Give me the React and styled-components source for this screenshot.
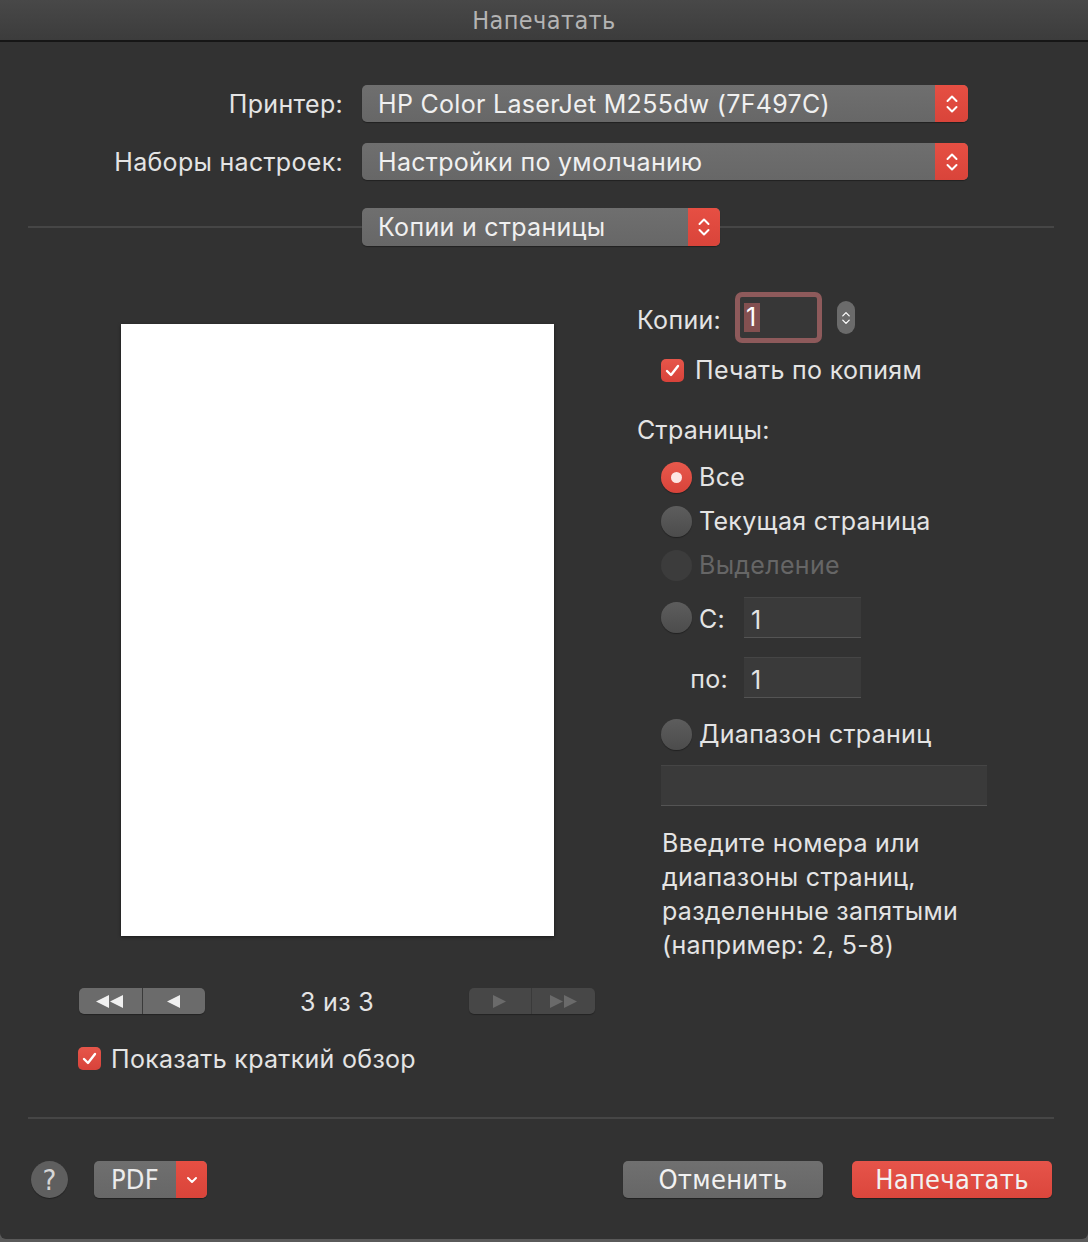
import React from "react";
import styled, { createGlobalStyle } from "styled-components";

const Global = createGlobalStyle`
  html, body { margin: 0; padding: 0; background: #5a5a5a; }
  body { font-family: Inter, "Noto Sans", "DejaVu Sans", sans-serif; -webkit-font-smoothing: antialiased; }
  * { box-sizing: border-box; }
`;

const GRAY = "#6b6b6b";
const TEXT = "#e4e4e4";
const CONDENSED = `"Liberation Sans Narrow", "DejaVu Sans Condensed", "Roboto", sans-serif`;
const FS = "25px";
const LS = "0.3px";

const Window = styled.div`
  width: 1088px;
  height: 1239px;
  background: #323232;
  border-radius: 0 0 6px 6px;
  display: flex;
  flex-direction: column;
  overflow: hidden;
  letter-spacing: ${LS};
`;

const TitleBar = styled.div`
  height: 42px;
  flex: 0 0 42px;
  background: linear-gradient(#484848, #3c3c3c);
  border-bottom: 2px solid #161616;
  display: flex;
  align-items: center;
  justify-content: center;
`;

const Title = styled.span`
  font-family: ${CONDENSED};
  font-size: 25px;
  color: #b4b4b4;
  letter-spacing: 0.4px;
  margin-top: 1px;
`;

const FormGrid = styled.div`
  display: grid;
  grid-template-columns: 343px 606px;
  grid-auto-rows: 37px;
  column-gap: 19px;
  row-gap: 21px;
  margin-top: 43px;
`;

const Label = styled.div`
  font-size: ${FS};
  color: ${TEXT};
  display: flex;
  align-items: center;
  justify-content: ${(p) => (p.$align === "right" ? "flex-end" : "flex-start")};
  white-space: nowrap;
`;

const Popup = styled.div`
  width: ${(p) => p.$width || "606px"};
  height: ${(p) => p.$height || "37px"};
  margin-left: ${(p) => p.$ml || "0"};
  background: linear-gradient(#6f6f6f, #676767);
  border-radius: 5px;
  display: flex;
  align-items: stretch;
  overflow: hidden;
  box-shadow: 0 1px 1px rgba(0, 0, 0, 0.35);
`;

const PopupText = styled.div`
  flex: 1;
  display: flex;
  align-items: center;
  padding-left: 16px;
  font-size: ${FS};
  color: #f0f0f0;
  white-space: nowrap;
`;

const RedCap = styled.div`
  flex: 0 0 ${(p) => p.$width || "33px"};
  background: linear-gradient(#e64f43, #d9443a);
  display: flex;
  align-items: center;
  justify-content: center;
`;

const UpDown = ({ w = 14, h = 24, sw = 2 }) => (
  <svg width={w} height={h} viewBox="0 0 14 24" fill="none">
    <path d="M2.5 9 L7 4.5 L11.5 9" stroke="#fff" strokeWidth={sw} strokeLinecap="round" strokeLinejoin="round" />
    <path d="M2.5 15 L7 19.5 L11.5 15" stroke="#fff" strokeWidth={sw} strokeLinecap="round" strokeLinejoin="round" />
  </svg>
);

const DividerRow = styled.div`
  display: flex;
  align-items: center;
  margin-top: 28px;
  padding: 0 34px 0 28px;
`;

const Line = styled.div`
  height: 2px;
  background: #464646;
  flex: ${(p) => (p.$fixed ? `0 0 ${p.$fixed}` : "1")};
`;

const Main = styled.div`
  display: flex;
  align-items: flex-start;
`;

const LeftCol = styled.div`
  margin-left: 79px;
  width: 516px;
  display: flex;
  flex-direction: column;
  align-items: center;
`;

const Page = styled.div`
  margin-top: 78px;
  width: 433px;
  height: 612px;
  background: #ffffff;
  box-shadow: 0 1px 3px rgba(0, 0, 0, 0.5);
`;

const NavRow = styled.div`
  margin-top: 52px;
  width: 516px;
  height: 26px;
  display: flex;
  align-items: center;
  justify-content: space-between;
`;

const SegGroup = styled.div`
  display: flex;
  width: 126px;
  height: 26px;
  border-radius: 5px;
  overflow: hidden;
  background: ${(p) => (p.$disabled ? "#474747" : GRAY)};
  box-shadow: 0 1px 1px rgba(0, 0, 0, 0.3);
`;

const Seg = styled.div`
  flex: 1;
  display: flex;
  align-items: center;
  justify-content: center;
  & + & {
    border-left: 1px solid ${(p) => (p.$disabled ? "#3a3a3a" : "#575757")};
  }
`;

const PageCount = styled.span`
  font-size: ${FS};
  color: ${TEXT};
  margin-top: 2px;
`;

const Tri = ({ dir, double, color }) => {
  const one = dir === "left" ? "M13 0 L13 13 L0 6.5 Z" : "M0 0 L0 13 L13 6.5 Z";
  return (
    <svg width={double ? 28 : 14} height="13" viewBox={`0 0 ${double ? 28 : 14} 13`}>
      <path d={one} fill={color} />
      {double && <path d={one} fill={color} transform="translate(14 0)" />}
    </svg>
  );
};

const CheckRow = styled.div`
  display: flex;
  align-items: center;
  gap: ${(p) => p.$gap || "10px"};
  margin-top: ${(p) => p.$mt || "0"};
  margin-left: ${(p) => p.$ml || "0"};
  align-self: flex-start;
  height: ${(p) => p.$h || "auto"};
`;

const CheckBox = styled.div`
  width: 23px;
  height: 23px;
  border-radius: 5px;
  background: linear-gradient(#e6564a, #d8423a);
  display: flex;
  align-items: center;
  justify-content: center;
  flex: 0 0 23px;
`;

const Check = () => (
  <svg width="15" height="13" viewBox="0 0 15 13" fill="none">
    <path d="M2 7 L6 11 L13 2" stroke="#fff" strokeWidth="2.4" strokeLinecap="round" strokeLinejoin="round" />
  </svg>
);

const RightCol = styled.div`
  margin-left: 42px;
  display: flex;
  flex-direction: column;
`;

const CopiesRow = styled.div`
  margin-top: 46px;
  height: 51px;
  display: flex;
  align-items: center;
`;

const CopiesLabel = styled.span`
  width: 98px;
  font-size: ${FS};
  color: ${TEXT};
  margin-top: 4px;
`;

const FocusRing = styled.div`
  width: 87px;
  height: 51px;
  border-radius: 7px;
  background: #8e5a5b;
  padding: 5px;
  display: flex;
`;

const FocusField = styled.div`
  flex: 1;
  background: #373737;
  border-radius: 2px;
  display: flex;
  align-items: center;
  padding-left: 4px;
`;

const Selected = styled.span`
  background: #835050;
  color: #fff;
  font-size: ${FS};
  line-height: 29px;
  padding: 0 4px 0 2px;
`;

const SmallStepper = styled.div`
  margin-left: 15px;
  width: 18px;
  height: 33px;
  border-radius: 9px;
  background: ${GRAY};
  display: flex;
  align-items: center;
  justify-content: center;
`;

const Heading = styled.div`
  font-size: ${FS};
  color: ${TEXT};
  height: 30px;
  line-height: 30px;
  margin-top: ${(p) => p.$mt || "0"};
`;

const OptionRow = styled.div`
  height: ${(p) => p.$h || "44px"};
  margin-top: ${(p) => p.$mt || "0"};
  margin-left: 24px;
  display: flex;
  align-items: center;
`;

const Radio = styled.div`
  width: 31px;
  height: 31px;
  border-radius: 50%;
  flex: 0 0 31px;
  display: flex;
  align-items: center;
  justify-content: center;
  background: ${(p) =>
    p.$on
      ? "linear-gradient(#e8594c, #d8433a)"
      : p.$disabled
      ? "#3c3c3c"
      : "linear-gradient(#5d5d5d, #4c4c4c)"};
  box-shadow: ${(p) => (p.$disabled ? "none" : "0 1px 1px rgba(0,0,0,0.35)")};
  &::after {
    content: "";
    display: ${(p) => (p.$on ? "block" : "none")};
    width: 11px;
    height: 11px;
    border-radius: 50%;
    background: #fde6e3;
  }
`;

const OptionText = styled.span`
  margin-left: 7px;
  font-size: ${FS};
  color: ${(p) => (p.$disabled ? "#666666" : TEXT)};
  white-space: nowrap;
`;

const FieldLabel = styled.span`
  width: ${(p) => p.$w};
  margin-left: ${(p) => p.$ml || "0"};
  text-align: ${(p) => p.$ta || "right"};
  font-size: ${FS};
  color: ${TEXT};
  margin-top: 3px;
`;

const Field = styled.div`
  width: ${(p) => p.$w || "117px"};
  height: 41px;
  margin-left: ${(p) => p.$ml || "0"};
  background: #3a3a3a;
  border-top: 1px solid #454545;
  border-bottom: 1px solid #545454;
  display: flex;
  align-items: center;
  padding-left: 7px;
  padding-top: 4px;
  font-size: ${FS};
  color: ${TEXT};
`;

const HelpText = styled.div`
  margin-top: 20px;
  margin-left: 25px;
  font-size: ${FS};
  line-height: 34px;
  color: ${TEXT};
`;

const BottomLine = styled.div`
  margin: 47px 34px 0 28px;
  height: 2px;
  background: #464646;
`;

const Footer = styled.div`
  margin-top: 41px;
  padding: 0 36px 0 31px;
  display: flex;
  align-items: center;
  height: 39px;
`;

const HelpBtn = styled.div`
  width: 37px;
  height: 37px;
  border-radius: 50%;
  background: #5f5f5f;
  display: flex;
  align-items: center;
  justify-content: center;
  font-family: ${CONDENSED};
  font-size: 29px;
  color: #d6d6d6;
  box-shadow: 0 1px 1px rgba(0, 0, 0, 0.35);
`;

const PdfText = styled.div`
  flex: 1;
  display: flex;
  align-items: center;
  justify-content: center;
  font-family: ${CONDENSED};
  font-size: 27px;
  color: #ececec;
`;

const Spacer = styled.div`
  flex: 1;
`;

const Button = styled.div`
  width: 200px;
  height: 37px;
  border-radius: 5px;
  margin-left: ${(p) => p.$ml || "0"};
  background: ${(p) => (p.$primary ? "linear-gradient(#e6544a, #db463c)" : "linear-gradient(#707070, #666666)")};
  display: flex;
  align-items: center;
  justify-content: center;
  font-family: ${CONDENSED};
  font-size: 27px;
  color: #f2f2f2;
  box-shadow: 0 1px 1px rgba(0, 0, 0, 0.35);
`;

export default function App() {
  return (
    <>
      <Global />
      <Window>
        <TitleBar>
          <Title>Напечатать</Title>
        </TitleBar>

        <FormGrid>
          <Label $align="right">Принтер:</Label>
          <Popup>
            <PopupText>HP Color LaserJet M255dw (7F497C)</PopupText>
            <RedCap><UpDown /></RedCap>
          </Popup>
          <Label $align="right">Наборы настроек:</Label>
          <Popup>
            <PopupText>Настройки по умолчанию</PopupText>
            <RedCap><UpDown /></RedCap>
          </Popup>
        </FormGrid>

        <DividerRow>
          <Line $fixed="334px" />
          <Popup $width="358px" $height="38px">
            <PopupText>Копии и страницы</PopupText>
            <RedCap $width="32px"><UpDown /></RedCap>
          </Popup>
          <Line />
        </DividerRow>

        <Main>
          <LeftCol>
            <Page />
            <NavRow>
              <SegGroup>
                <Seg><Tri dir="left" double color="#f0f0f0" /></Seg>
                <Seg><Tri dir="left" color="#f0f0f0" /></Seg>
              </SegGroup>
              <PageCount>3 из 3</PageCount>
              <SegGroup $disabled>
                <Seg $disabled><Tri dir="right" color="#6a6a6a" /></Seg>
                <Seg $disabled><Tri dir="right" double color="#6a6a6a" /></Seg>
              </SegGroup>
            </NavRow>
            <CheckRow $mt="33px" $ml="-1px" $h="23px">
              <CheckBox><Check /></CheckBox>
              <Label>Показать краткий обзор</Label>
            </CheckRow>
          </LeftCol>

          <RightCol>
            <CopiesRow>
              <CopiesLabel>Копии:</CopiesLabel>
              <FocusRing>
                <FocusField><Selected>1</Selected></FocusField>
              </FocusRing>
              <SmallStepper><UpDown w={10} h={20} sw={1.8} /></SmallStepper>
            </CopiesRow>
            <CheckRow $mt="12px" $ml="24px" $h="30px" $gap="11px">
              <CheckBox><Check /></CheckBox>
              <Label>Печать по копиям</Label>
            </CheckRow>

            <Heading $mt="30px">Страницы:</Heading>

            <OptionRow $mt="10px">
              <Radio $on />
              <OptionText>Все</OptionText>
            </OptionRow>
            <OptionRow>
              <Radio />
              <OptionText>Текущая страница</OptionText>
            </OptionRow>
            <OptionRow>
              <Radio $disabled />
              <OptionText $disabled>Выделение</OptionText>
            </OptionRow>
            <OptionRow $h="41px" $mt="10px">
              <Radio />
              <FieldLabel $w="29px" $ml="7px" $ta="left">С:</FieldLabel>
              <Field $ml="16px">1</Field>
            </OptionRow>
            <OptionRow $h="41px" $mt="19px">
              <FieldLabel $w="67px">по:</FieldLabel>
              <Field $ml="16px">1</Field>
            </OptionRow>
            <OptionRow $mt="14px">
              <Radio />
              <OptionText>Диапазон страниц</OptionText>
            </OptionRow>
            <OptionRow $h="41px" $mt="9px">
              <Field $w="326px" />
            </OptionRow>
            <HelpText>
              Введите номера или
              <br />
              диапазоны страниц,
              <br />
              разделенные запятыми
              <br />
              (например: 2, 5-8)
            </HelpText>
          </RightCol>
        </Main>

        <BottomLine />

        <Footer>
          <HelpBtn>?</HelpBtn>
          <Popup $width="113px" $ml="26px">
            <PdfText>PDF</PdfText>
            <RedCap $width="31px">
              <svg width="12" height="8" viewBox="0 0 12 8" fill="none">
                <path d="M2 2 L6 6 L10 2" stroke="#fff" strokeWidth="2" strokeLinecap="round" strokeLinejoin="round" />
              </svg>
            </RedCap>
          </Popup>
          <Spacer />
          <Button>Отменить</Button>
          <Button $primary $ml="29px">Напечатать</Button>
        </Footer>
      </Window>
    </>
  );
}
